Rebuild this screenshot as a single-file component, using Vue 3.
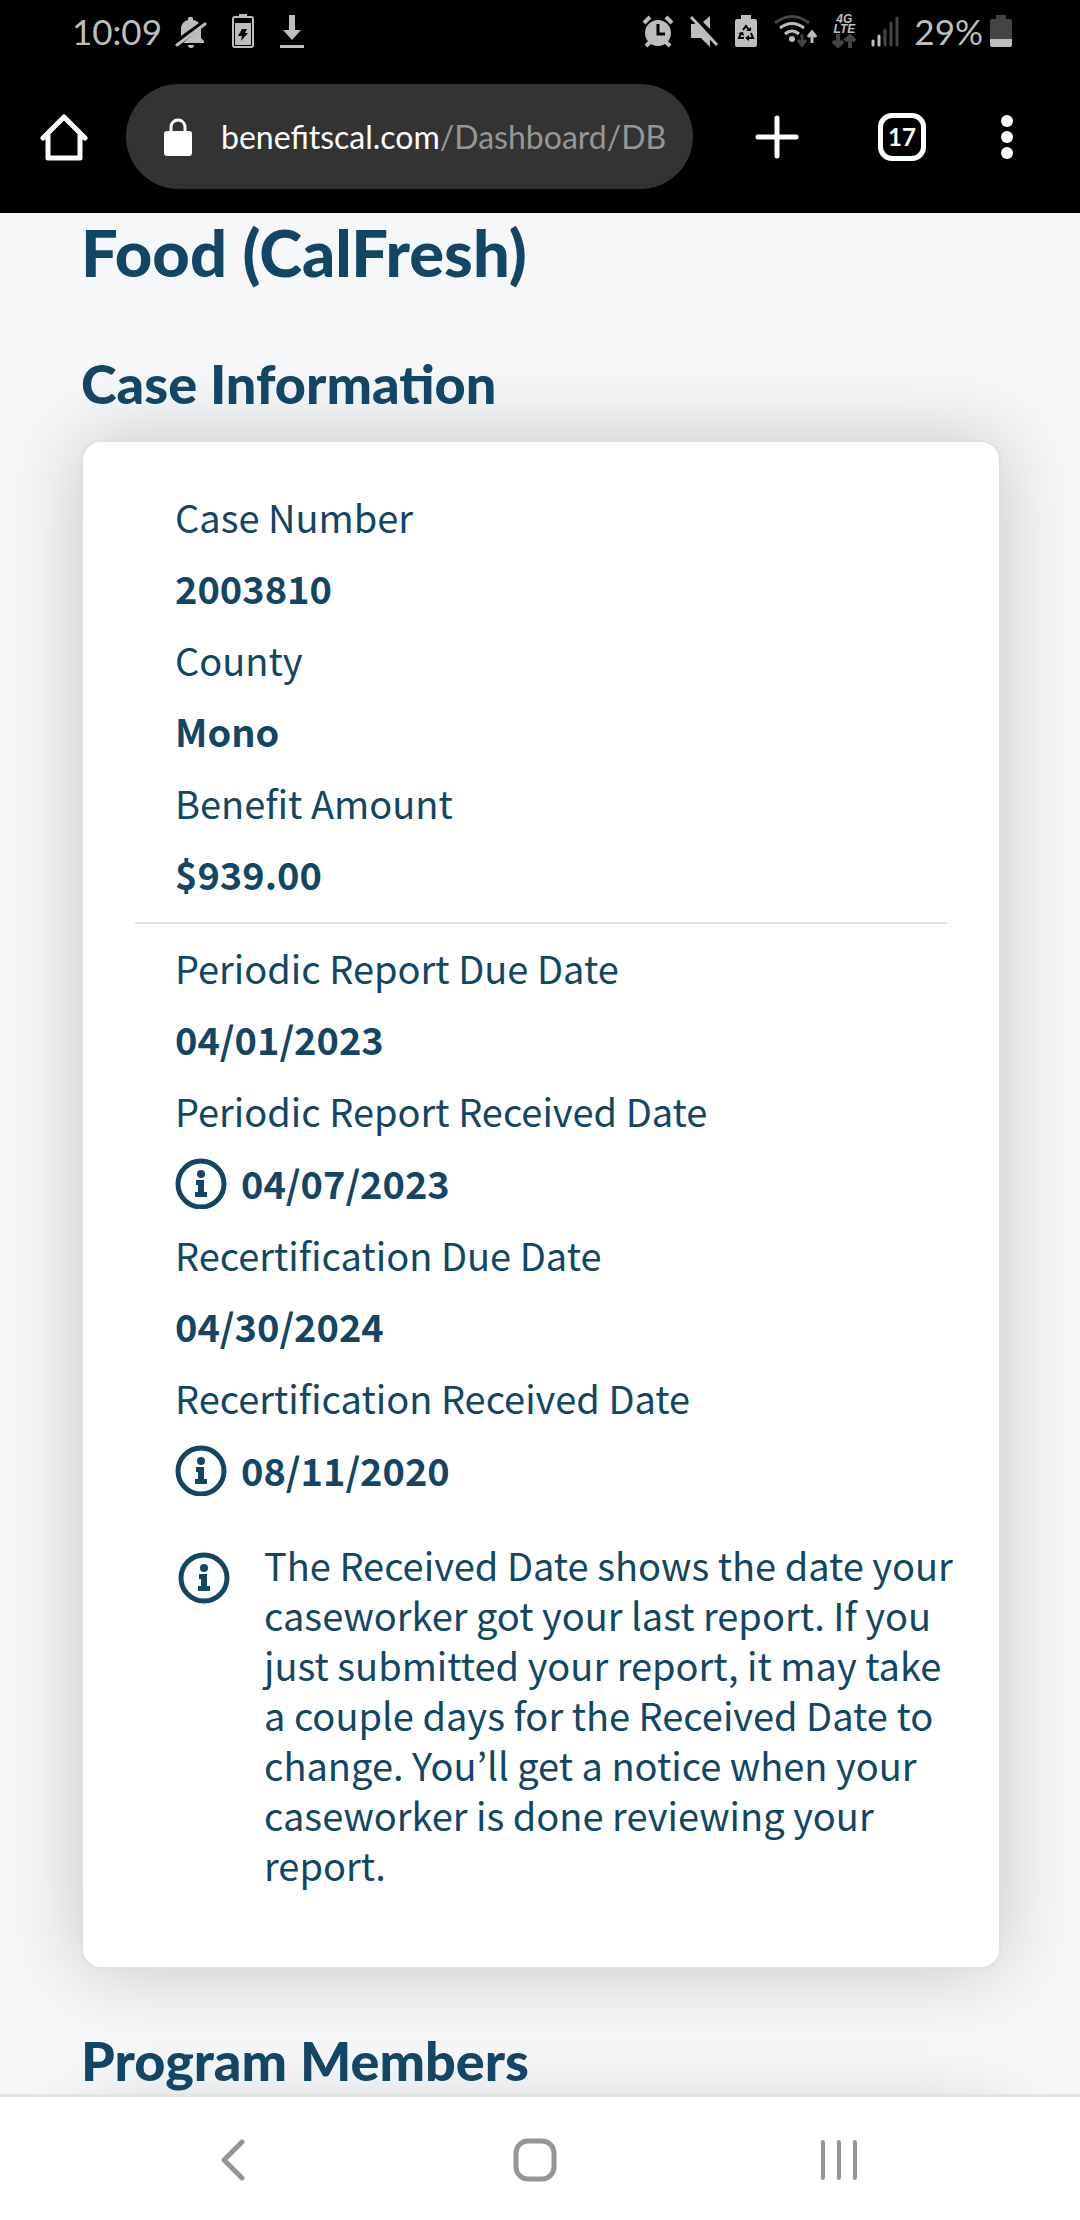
<script setup>
const summary = [
  { label: 'Case Number', value: '2003810' },
  { label: 'County', value: 'Mono' },
  { label: 'Benefit Amount', value: '$939.00' },
]

const dates = [
  { label: 'Periodic Report Due Date', value: '04/01/2023' },
  { label: 'Periodic Report Received Date', value: '04/07/2023', info: true },
  { label: 'Recertification Due Date', value: '04/30/2024' },
  { label: 'Recertification Received Date', value: '08/11/2020', info: true },
]
</script>

<template>
  <div class="screen">
    <header class="chrome">
      <div class="status">
        <div class="status-left">
          <time class="status-text">10:09</time>
          <svg width="32" height="36" viewBox="0 0 32 36" fill="#bdbdbd">
            <path d="M6 23V16c0-5 3-8 7-9V5a3 3 0 0 1 5 0v2c2 0 4 1 6 3z" />
            <path d="M26 15v10l3 3v2H8z" />
            <path d="M13 32h6a3 3 0 0 1-6 0z" />
            <path d="M2 32 30 11" stroke="#bdbdbd" stroke-width="3" stroke-linecap="round" />
          </svg>
          <svg width="24" height="36" viewBox="0 0 24 36">
            <path d="M8 1h8v3H8z" fill="#bdbdbd" />
            <rect x="2" y="4" width="20" height="30" rx="2" fill="none" stroke="#bdbdbd" stroke-width="2" />
            <path d="M4 10h16v22H4z" fill="#bdbdbd" />
            <path d="M11 16h5l-2 4h3l-7 8 1-5H7z" fill="#000" />
          </svg>
          <svg width="26" height="36" viewBox="0 0 26 36" fill="#bdbdbd">
            <path d="M10 2h6v15h6l-9 10-9-10h6zM1 32h24v3H1z" />
          </svg>
        </div>
        <div class="status-right">
          <svg width="32" height="34" viewBox="0 0 32 34">
            <circle cx="16" cy="19" r="13" fill="#bdbdbd" />
            <path d="M2 9l6-6M30 9l-6-6M4 32l4-4M28 32l-4-4" stroke="#bdbdbd" stroke-width="4" />
            <path d="M16 10v10h7" fill="none" stroke="#000" stroke-width="3" />
          </svg>
          <svg width="30" height="34" viewBox="0 0 30 34" fill="#bdbdbd">
            <path d="M2 10h5l14 14v9l-9-9H2zM21 2v13l-7-7z" />
            <path d="M2 3 28 31" stroke="#bdbdbd" stroke-width="3" />
          </svg>
          <svg width="24" height="34" viewBox="0 0 24 34">
            <path d="M7 1h10v4h4a2 2 0 0 1 2 2v24a2 2 0 0 1-2 2H3a2 2 0 0 1-2-2V7a2 2 0 0 1 2-2h4z" fill="#bdbdbd" />
            <path d="M9 16l3-4 3 4M17 19l2 5h-5M10 24H5l2-5" fill="none" stroke="#000" stroke-width="2" />
            <path d="M12 17h5v-4zM15 21v6l-4-3zM4 19l5-1 1 4z" fill="#000" />
          </svg>
          <svg width="44" height="34" viewBox="0 0 44 34" fill="none">
            <path d="M2 9Q19-4 36 9" stroke="#444" stroke-width="3" />
            <path d="M7 14q12-9 24 0M12 20q7-6 14 0" stroke="#bdbdbd" stroke-width="3" />
            <circle cx="19" cy="25" r="3" fill="#bdbdbd" />
            <path d="M29 20v11M25 26l4 5 4-5" stroke="#444" stroke-width="3" />
            <path d="M39 29V18M35 23l4-5 4 5" stroke="#bdbdbd" stroke-width="3" />
          </svg>
          <div class="network">
            <span>4G</span>
            <span>LTE</span>
            <svg width="24" height="14" viewBox="0 0 24 14" fill="none" stroke="#444" stroke-width="4">
              <path d="M6 0v12M1 7l5 5 5-5M18 14V2M13 7l5-5 5 5" />
            </svg>
          </div>
          <svg width="28" height="34" viewBox="0 0 28 34" stroke-width="3" stroke-linecap="round">
            <path d="M2 27v4M8 22v9" stroke="#bdbdbd" />
            <path d="M14 16v15M20 9v22M26 4v27" stroke="#444" />
          </svg>
          <span class="status-text">29%</span>
          <svg width="22" height="34" viewBox="0 0 22 34">
            <path d="M6 1h10v4h4a2 2 0 0 1 2 2v18H0V7a2 2 0 0 1 2-2h4z" fill="#444" />
            <path d="M0 25h22v6a2 2 0 0 1-2 2H2a2 2 0 0 1-2-2z" fill="#bdbdbd" />
          </svg>
        </div>
      </div>

      <div class="toolbar">
        <button class="tool" aria-label="Home page">
          <svg width="48" height="48" viewBox="0 0 48 48" fill="none" stroke="#fff" stroke-width="5" stroke-linejoin="round" stroke-linecap="round">
            <path d="M3 25 24 4l21 21" />
            <path d="M8 22v23h32V22" />
          </svg>
        </button>
        <button class="address">
          <svg class="lock" width="30" height="38" viewBox="0 0 30 38">
            <rect x="1" y="13" width="28" height="25" rx="3" fill="#fff" />
            <path d="M8 14V9a7 7 0 0 1 14 0v5" fill="none" stroke="#fff" stroke-width="3" />
          </svg>
          <span class="url">benefitscal.com<span class="path">/Dashboard/DB</span></span>
        </button>
        <button class="tool" aria-label="New tab">
          <svg width="44" height="44" viewBox="0 0 44 44" stroke="#fff" stroke-width="5" stroke-linecap="round">
            <path d="M22 3v38M3 22h38" />
          </svg>
        </button>
        <button class="tabs" aria-label="17 open tabs">17</button>
        <button class="tool" aria-label="Menu">
          <svg width="12" height="44" viewBox="0 0 12 44" fill="#fff">
            <circle cx="6" cy="6" r="6" />
            <circle cx="6" cy="22" r="6" />
            <circle cx="6" cy="38" r="6" />
          </svg>
        </button>
      </div>
    </header>

    <main class="page">
      <h1>Food (CalFresh)</h1>

      <h2>Case Information</h2>
      <section class="card">
        <dl class="facts">
          <template v-for="row in summary" :key="row.label">
            <dt>{{ row.label }}</dt>
            <dd>{{ row.value }}</dd>
          </template>
        </dl>
        <hr />
        <dl class="facts">
          <template v-for="row in dates" :key="row.label">
            <dt>{{ row.label }}</dt>
            <dd :class="{ received: row.info }">
              <svg v-if="row.info" class="info" viewBox="0 0 52 52">
                <circle cx="26" cy="27" r="23" fill="none" stroke="currentColor" stroke-width="5" />
                <circle cx="26" cy="17" r="4" fill="currentColor" />
                <path d="M21 23h8v12h3v5H20v-5h3v-7h-2z" fill="currentColor" />
              </svg>
              {{ row.value }}
            </dd>
          </template>
        </dl>
        <div class="note">
          <svg class="info" viewBox="0 0 52 52">
            <circle cx="26" cy="26" r="23" fill="none" stroke="currentColor" stroke-width="5" />
            <circle cx="26" cy="16" r="4" fill="currentColor" />
            <path d="M21 22h8v12h3v5H20v-5h3v-7h-2z" fill="currentColor" />
          </svg>
          <p>
            The Received Date shows the date your caseworker got your last report. If you just
            submitted your report, it may take a couple days for the Received Date to change.
            You’ll get a notice when your caseworker is done reviewing your report.
          </p>
        </div>
      </section>

      <h2>Program Members</h2>
      <section class="card"></section>
    </main>

    <nav class="system">
      <button aria-label="Back">
        <svg width="44" height="44" viewBox="0 0 44 44" fill="none" stroke="#959595" stroke-width="5" stroke-linecap="round" stroke-linejoin="round">
          <path d="M31 4 13 22l18 18" />
        </svg>
      </button>
      <button aria-label="Home">
        <svg width="44" height="44" viewBox="0 0 44 44" fill="none" stroke="#959595" stroke-width="5">
          <rect x="3" y="3" width="38" height="38" rx="12" />
        </svg>
      </button>
      <button aria-label="Recent apps">
        <svg width="44" height="44" viewBox="0 0 44 44" stroke="#959595" stroke-width="4" stroke-linecap="round">
          <path d="M8 4v36M24 4v36M40 4v36" />
        </svg>
      </button>
    </nav>
  </div>
</template>

<style>
body {
  margin: 0;
  background: #f5f7f9;
}
</style>

<style scoped>
.screen {
  display: flex;
  flex-direction: column;
  height: 100vh;
  overflow: hidden;
  color: #124664;
  font-family: "Noto Sans CJK KR", "Noto Sans", sans-serif;
}

svg {
  display: block;
  flex: none;
}

button {
  padding: 0;
  border: 0;
  background: none;
  font: inherit;
}

.chrome {
  flex: none;
  padding-bottom: 24px;
  background: #000;
  font-family: Lato, sans-serif;
}

.status {
  display: flex;
  justify-content: space-between;
  height: 62px;
  padding: 0 68px 0 72px;
}

.status-left,
.status-right {
  display: flex;
  align-items: center;
}

.status-left {
  gap: 24px;
}

.status-right {
  gap: 15px;
}

.status-text {
  color: #bdbdbd;
  font-size: 35px;
  line-height: 36px;
}

.status-left .status-text {
  margin-right: -11px;
}

.status-right .status-text {
  margin-right: -8px;
}

.network {
  display: flex;
  flex-direction: column;
  align-items: center;
  color: #bdbdbd;
  font: italic bold 12px/10px "Liberation Sans", sans-serif;
}

.toolbar {
  display: flex;
  align-items: center;
  margin-top: 22px;
  padding: 0 67px 0 40px;
}

.tool {
  flex: none;
}

.address {
  display: flex;
  flex: 1;
  align-items: center;
  gap: 28px;
  min-width: 0;
  height: 105px;
  margin: 0 62px 0 38px;
  padding: 0 20px 0 37px;
  border-radius: 53px;
  background: #333;
}

.url {
  overflow: hidden;
  color: #fff;
  font-size: 32px;
  line-height: 44px;
  white-space: nowrap;
}

.path {
  color: #969696;
}

.tabs {
  flex: none;
  width: 48px;
  height: 48px;
  margin: 0 75px 0 79px;
  border: 5px solid #fff;
  border-radius: 14px;
  color: #fff;
  font-size: 24px;
  font-weight: bold;
  line-height: 36px;
}

.page {
  flex: 1;
  min-height: 0;
  padding: 0 79px 0 81px;
  overflow: hidden;
  background: #f5f7f9;
}

h1,
h2 {
  font-family: Lato, sans-serif;
  font-weight: 900;
}

h1 {
  margin: 0 0 61px;
  font-size: 65px;
  line-height: 78px;
}

h2 {
  margin: 60px 0 24px;
  font-size: 54px;
  line-height: 64px;
}

.card {
  padding: 39px 44px 77px 52px;
  border: 2px solid #dfe0e4;
  border-radius: 20px;
  background: #fff;
  box-shadow: 0 0 80px rgba(0, 0, 0, 0.2);
}

.facts {
  margin: 0;
  padding-left: 40px;
  font-size: 38px;
}

dt {
  line-height: 71px;
}

dd {
  display: flex;
  align-items: center;
  gap: 14px;
  margin: 0;
  font-weight: bold;
  line-height: 72px;
}

dd.received {
  line-height: 73px;
}

hr {
  height: 2px;
  margin: 12px 8px 8px 0;
  border: 0;
  background: #dfe0e4;
}

.info {
  width: 52px;
  height: 52px;
}

.note {
  display: flex;
  gap: 34px;
  margin-top: 34px;
  padding-left: 43px;
}

.note .info {
  margin-top: 12px;
}

.note p {
  margin: 0;
  font-size: 38px;
  line-height: 50px;
}

.system {
  display: flex;
  flex: none;
  align-items: center;
  justify-content: space-between;
  padding: 41px 221px 38px 211px;
  border-top: 3px solid #e2e4e0;
  background: #fff;
}
</style>
